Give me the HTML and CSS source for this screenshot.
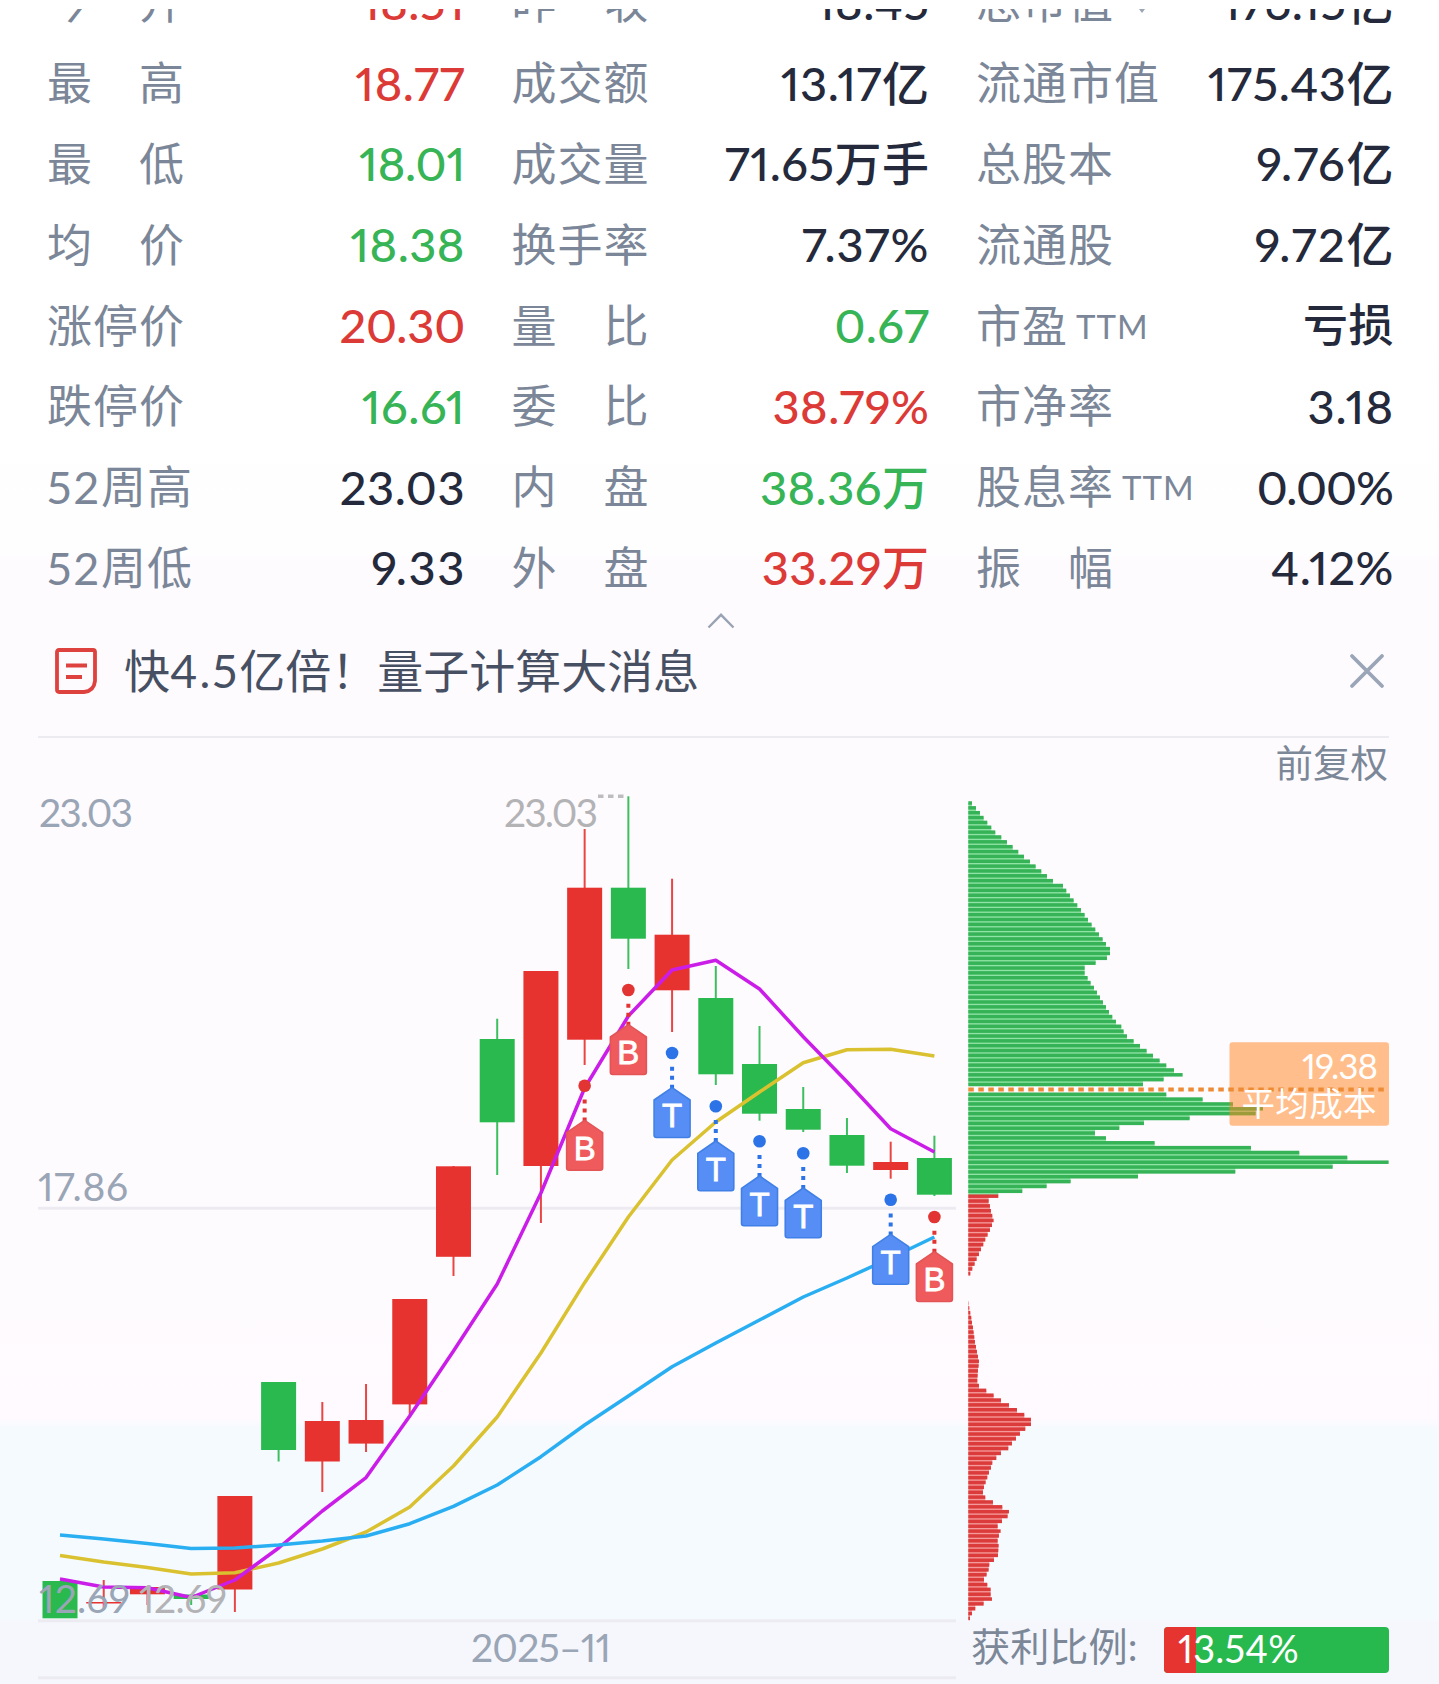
FILE: index.html
```html
<!DOCTYPE html>
<html lang="zh-CN">
<head>
<meta charset="utf-8">
<title>个股行情</title>
<link rel="stylesheet" href="styles.css">
</head>
<body>
<main class="page">
  <section class="stats">
    <div class="grid">
      <div class="cell"><span class="label">今　开</span><span class="value up">18.51</span></div>
      <div class="cell"><span class="label">昨　收</span><span class="value">18.45</span></div>
      <div class="cell"><span class="label">总市值<i class="caret"></i></span><span class="value">176.15亿</span></div>

      <div class="cell"><span class="label">最　高</span><span class="value up">18.77</span></div>
      <div class="cell"><span class="label">成交额</span><span class="value">13.17亿</span></div>
      <div class="cell"><span class="label">流通市值</span><span class="value">175.43亿</span></div>

      <div class="cell"><span class="label">最　低</span><span class="value tight down">18.01</span></div>
      <div class="cell"><span class="label">成交量</span><span class="value">71.65万手</span></div>
      <div class="cell"><span class="label">总股本</span><span class="value wide">9.76亿</span></div>

      <div class="cell"><span class="label">均　价</span><span class="value down">18.38</span></div>
      <div class="cell"><span class="label">换手率</span><span class="value loose">7.37%</span></div>
      <div class="cell"><span class="label">流通股</span><span class="value wide">9.72亿</span></div>

      <div class="cell"><span class="label">涨停价</span><span class="value tight up">20.30</span></div>
      <div class="cell"><span class="label">量　比</span><span class="value down">0.67</span></div>
      <div class="cell"><span class="label">市盈<small class="ttm">TTM</small></span><span class="value hanzi">亏损</span></div>

      <div class="cell"><span class="label">跌停价</span><span class="value down">16.61</span></div>
      <div class="cell"><span class="label">委　比</span><span class="value up">38.79%</span></div>
      <div class="cell"><span class="label">市净率</span><span class="value loose">3.18</span></div>

      <div class="cell"><span class="label"><span class="num">52</span>周高</span><span class="value">23.03</span></div>
      <div class="cell"><span class="label">内　盘</span><span class="value down">38.36万</span></div>
      <div class="cell"><span class="label">股息率<small class="ttm">TTM</small></span><span class="value tighter">0.00%</span></div>

      <div class="cell"><span class="label"><span class="num">52</span>周低</span><span class="value wide">9.33</span></div>
      <div class="cell"><span class="label">外　盘</span><span class="value up">33.29万</span></div>
      <div class="cell"><span class="label">振　幅</span><span class="value">4.12%</span></div>
    </div>
  </section>

  <div class="collapse">
    <svg width="28" height="16" viewBox="0 0 28 16"><path d="M1.5 14.5 14 1.8 26.5 14.5"/></svg>
  </div>

  <section class="news">
    <svg class="news-icon" width="42" height="46" viewBox="0 0 42 46">
      <path d="M4 2H38Q40 2 40 4V33Q39 43 29 44H4Q2 44 2 42V4Q2 2 4 2Z"/>
      <path d="M11 17.5H32M11 29H27"/>
    </svg>
    <span class="news-title">快<span class="num">4.5</span>亿倍！量子计算大消息</span>
    <svg class="close" width="36" height="36" viewBox="0 0 36 36"><path d="M3 3 33 33M33 3 3 33"/></svg>
  </section>

  <div class="adjust">前复权</div>

  <section class="charts">
    <svg id="kline" class="kline" width="918" height="896" viewBox="38 788 918 896"></svg>
    <div class="chips">
      <svg id="chips" width="421" height="833" viewBox="968 788 421 833"></svg>
      <div class="profit">
        <span class="profit-label">获利比例:</span>
        <div class="profit-bar"><div class="profit-fill"></div><span class="profit-value">13.54%</span></div>
      </div>
    </div>
  </section>
</main>
<script src="chart.js"></script>
</body>
</html>
```
FILE: styles.css
```css
* { box-sizing: border-box; }

body {
  margin: 0;
  font-family: Lato, "Noto Sans CJK SC", sans-serif;
  font-feature-settings: "pnum" 1;
  background: #fff;
}

.page {
  width: 1439px;
  height: 1684px;
  padding-top: 9px;
  overflow: hidden;
  background: linear-gradient(#fff 0, #fff 300px, #fefeff 552px, #fefbff 562px, #fefbff 1300px, #fffaff 1418px, #f5faff 1428px, #f5faff 1619px, #f6f7fd 1622px, #f6f7fd 100%);
}

.stats { height: 600px; overflow: hidden; }

.grid {
  display: grid;
  grid-template-columns: repeat(3, 418px);
  grid-auto-rows: 80.8px;
  column-gap: 46.5px;
  margin: -47.5px 0 0 47px;
}

.cell {
  display: flex;
  align-items: center;
  justify-content: space-between;
  white-space: nowrap;
  line-height: 80px;
}

.label {
  padding-top: 1px;
  font-size: 45px;
  letter-spacing: 1px;
  color: #7b8798;
}

.value {
  font-size: 47px;
  font-weight: 500;
  letter-spacing: 0.5px;
  color: #242a3b;
}

.loose { letter-spacing: 1px; }
.wide { letter-spacing: 1.6px; margin-right: -1px; }
.tight { letter-spacing: -0.2px; }
.tighter { letter-spacing: -1px; margin-right: 1px; }
.hanzi { font-size: 45px; }

.up { color: #dc3a36; }
.down { color: #36b456; }

.ttm {
  margin-left: 8px;
  font-size: 33px;
  font-weight: 400;
  vertical-align: 4px;
}

.num { letter-spacing: 2px; }

.caret {
  display: inline-block;
  margin: 0 0 0 22px;
  border: 6px solid transparent;
  border-top: 8px solid #9aa5b5;
  border-bottom: 0;
  vertical-align: 6px;
}

.collapse {
  display: flex;
  justify-content: center;
  height: 23px;
  padding: 4px 0 0 2px;
}

.collapse svg { fill: none; stroke: #9aa3b3; stroke-width: 2.4; }

.news {
  display: flex;
  align-items: center;
  width: 1351px;
  height: 106px;
  margin-left: 38px;
  padding: 1px 4px 27px 17px;
  border-bottom: 2px solid #ececf0;
}

.news-icon { fill: none; stroke: #de423f; stroke-width: 3.8; }

.news-title {
  margin-left: 27px;
  padding-bottom: 1px;
  font-size: 46px;
  line-height: 70px;
  color: #475062;
  white-space: nowrap;
}

.close {
  margin-left: auto;
  fill: none;
  stroke: #9aa5b8;
  stroke-width: 3.8;
  stroke-linecap: round;
}

.adjust {
  height: 50px;
  padding-right: 51px;
  font-size: 37.5px;
  line-height: 49px;
  text-align: right;
  color: #7c8898;
}

.charts {
  display: flex;
  gap: 12px;
  margin-left: 38px;
}

.charts svg { display: block; }

.chips { width: 421px; }

.profit {
  display: flex;
  align-items: center;
  justify-content: space-between;
  height: 58px;
  padding-left: 3px;
}

.profit-label {
  padding-bottom: 8px;
  font-size: 39.2px;
  line-height: 50px;
  color: #7c8898;
}

.profit-bar {
  position: relative;
  width: 225px;
  height: 46px;
  border-radius: 4px;
  overflow: hidden;
  background: #28b94e;
}

.profit-fill { width: 14%; height: 100%; background: #e63430; }

.profit-value {
  position: absolute;
  top: 0;
  left: 14px;
  font-size: 38px;
  line-height: 42px;
  letter-spacing: 0.2px;
  color: #fff;
}

.axis { font-size: 39px; fill: #9aa5b5; }
.extreme { font-size: 39px; fill: #b3b3b6; }
.rule { stroke: #ecebf1; stroke-width: 3; }
.ma { fill: none; stroke-width: 3.5; stroke-linejoin: round; }
.tag { font-family: "Liberation Sans", sans-serif; font-size: 33px; fill: #fff; stroke: #fff; stroke-width: 0.8; text-anchor: middle; }
.cost { fill: #fff; }
```
FILE: chart.js
```js
const RED = '#e7332f', GREEN = '#29b94e';
const STEP = 43.72, FIRST = 60;
const x = i => FIRST + i * STEP;

// [rising, body top, body bottom, wick top, wick bottom]
const candles = [
  [0, 1581, 1618.3, 1581, 1618], [1, 1602, 1603.5, 1580, 1610], [1, 1587, 1594.3, 1587, 1605],
  [0, 1594.5, 1599, 1594, 1605], [1, 1496, 1589.5, 1496, 1612], [0, 1382, 1450, 1382, 1461.5],
  [1, 1421, 1461.5, 1402, 1492], [1, 1420, 1443.6, 1384, 1452], [1, 1299, 1404.4, 1299, 1415],
  [1, 1166.3, 1256.8, 1166, 1276], [0, 1039, 1122.3, 1018.7, 1175], [1, 971, 1166, 971, 1223],
  [1, 887.7, 1039.7, 829, 1065], [0, 887.7, 938.7, 796.3, 969], [1, 934.7, 990.3, 878.7, 1032],
  [0, 998, 1074.3, 966, 1085], [0, 1064, 1113.7, 1026, 1120.7], [0, 1109, 1129.7, 1087, 1132],
  [0, 1135, 1165.7, 1118, 1173], [1, 1162, 1170, 1141.7, 1178.7], [0, 1158, 1194.7, 1135.7, 1196]
];

const averages = {
  '#dac12f': [1555.5, 1562, 1567.5, 1574, 1572.7, 1563, 1549, 1532, 1507, 1466, 1417, 1353, 1282.7, 1217, 1160, 1122, 1092, 1062.7, 1049.7, 1049.3, 1056],
  '#cb1de8': [1579, 1587, 1587.7, 1597.5, 1580, 1548, 1511, 1477.6, 1416, 1351, 1284, 1193, 1088, 1016, 970, 960.3, 989, 1036.7, 1081.7, 1128.7, 1152],
  '#2aaef2': [1535, 1539, 1543.5, 1548.5, 1548, 1545, 1541, 1536, 1523.7, 1506.4, 1485, 1456.7, 1425, 1396, 1366.7, 1343, 1320, 1297, 1278, 1258, 1237]
};

// [candle index, letter, dot y]
const trades = [
  [12, 'B', 1085.7], [13, 'B', 990], [14, 'T', 1053], [15, 'T', 1106.3],
  [16, 'T', 1141.3], [17, 'T', 1153.3], [19, 'T', 1199.7], [20, 'B', 1217]
];

const text = (cls, tx, ty, w, s) =>
  `<text class="${cls}" x="${tx}" y="${ty}" textLength="${w}">${s}</text>`;

let k = [1208.3, 1620.7, 1677.7].map(y => `<path class="rule" d="M38 ${y}H956"/>`).join('');
candles.forEach(([rise, top, bottom, hi, lo], i) => {
  const c = rise ? RED : GREEN;
  k += `<path d="M${x(i)} ${hi}V${lo}" stroke="${c}" stroke-width="2" opacity=".9"/>`;
  k += `<rect x="${x(i) - 17.5}" y="${top}" width="35" height="${bottom - top}" fill="${c}"/>`;
});
for (const [color, ys] of Object.entries(averages)) {
  k += `<polyline class="ma" stroke="${color}" points="${ys.map((y, i) => x(i) + ',' + y).join(' ')}"/>`;
}
k += '<path d="M598 796.3H624" stroke="#bdbdbf" stroke-width="3.5" stroke-dasharray="5.5 4.5"/>';
k += text('axis', 39, 827, 94, '23.03') + text('axis', 38, 1201, 90, '17.86') + text('axis', 39, 1613, 91, '12.69');
k += text('extreme', 504, 826.5, 94, '23.03') + text('extreme', 139, 1613, 88, '12.69');
k += text('axis', 471, 1661.5, 140, '2025–11');
trades.forEach(([i, letter, y]) => {
  const cx = x(i), buy = letter === 'B';
  const dark = buy ? '#e23432' : '#2b73e6';
  k += `<circle cx="${cx}" cy="${y}" r="6.3" fill="${dark}"/>`;
  k += `<path d="M${cx} ${y + 13.8}v22" stroke="${dark}" stroke-width="4" stroke-dasharray="4 5"/>`;
  k += `<path d="M${cx} ${y + 34.7}L${cx + 18} ${y + 47}V${y + 82}q0 2.5-2.5 2.5H${cx - 15.5}q-2.5 0-2.5-2.5V${y + 47}Z" fill="${buy ? '#ef5b5d' : '#578ef5'}" stroke="${buy ? '#e35456' : '#4080e6'}" stroke-width="1.6" stroke-linejoin="round"/>`;
  k += `<text class="tag" x="${cx}" y="${y + 74.3}">${letter}</text>`;
});
document.getElementById('kline').innerHTML = k;

// Holdings per price level, top to bottom
const levels = [
  11, 23, 35, 46, 57, 69, 81, 99, 116, 133, 150, 167, 185, 202, 219, 236, 254, 284, 294, 305, 316, 327, 338, 349,
  359, 370, 381, 392, 403, 413, 425, 425, 416, 382, 349, 349, 358, 367, 377, 386, 395, 404, 413, 422, 432, 443,
  459, 466, 476, 496, 515, 535, 554, 574, 594, 617, 643, 586, 524, 0, 594, 703, 794, 884, 862, 664, 527, 453,
  380, 413, 559, 848, 993, 1137, 1261, 1093, 801, 509, 307, 235, 162,
  90, 61, 65, 68, 72, 76, 71, 65, 58, 51, 45, 38, 32, 25, 19, 12, 6, 0, 0, 0, 0, 0,
  1, 3, 6, 9, 11, 14, 16, 18, 20, 23, 26, 29, 32, 31, 29, 28, 27, 32, 54, 76, 98, 122, 146, 168, 188, 188, 171,
  155, 143, 131, 120, 98, 84, 72, 68, 62, 57, 52, 47, 44, 51, 74, 102, 122, 118, 101, 88, 97, 92, 88, 91, 90,
  89, 77, 63, 61, 55, 47, 57, 67, 67, 71, 46, 21, 11, 5
];
let c = '';
levels.forEach((v, i) => {
  if (!v) return;
  const y = 803 + i * 4.854, w = v / 3, trapped = i < 81;
  const next = Math.min(v, levels[i + 1] || 0) / 3;
  c += `<rect x="968.3" y="${y}" width="${next}" height="4.9" fill="${trapped ? '#8fe3a4' : '#f59a9a'}"/>`;
  c += `<rect x="968.3" y="${y - 1.75}" width="${w}" height="3.5" fill="${trapped ? '#36b257' : '#dc3b3b'}"/>`;
});
c += '<rect x="1229.5" y="1042.3" width="159.5" height="83.4" rx="3" fill="#ff8620" fill-opacity=".52"/>';
c += '<path d="M968.3 1089.4H1385" stroke="#ee8b35" stroke-width="4" stroke-dasharray="5.5 4.5"/>';
c += '<text class="cost" font-size="35" x="1302" y="1079.3" textLength="76">19.38</text>';
c += '<text class="cost" font-size="33.5" x="1241.5" y="1115.5" textLength="135">平均成本</text>';
document.getElementById('chips').innerHTML = c;
```
